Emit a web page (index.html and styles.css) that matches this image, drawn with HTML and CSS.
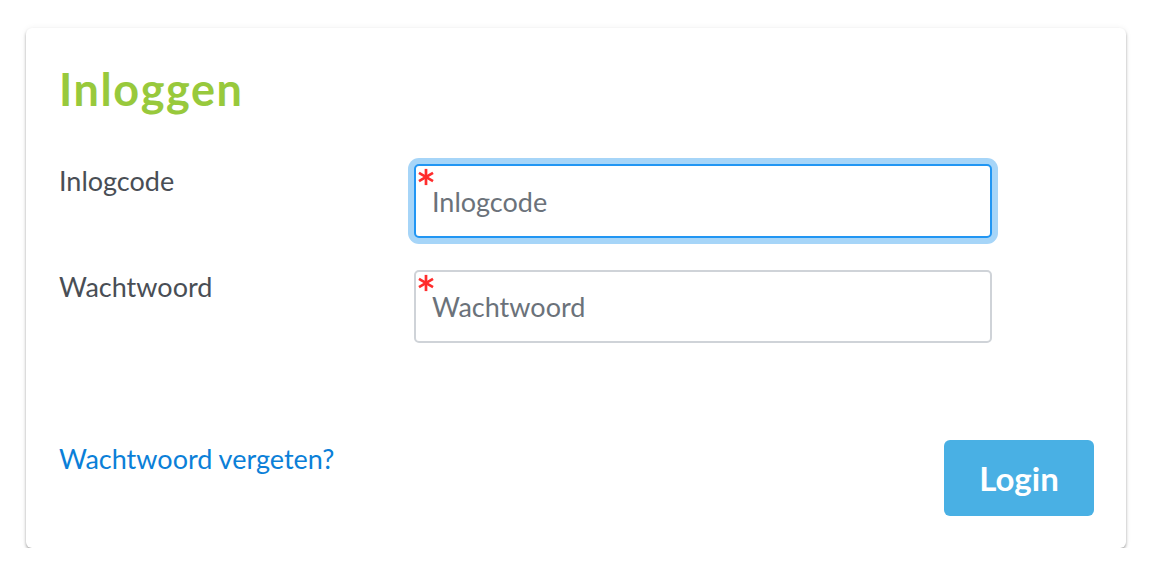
FILE: index.html
```html
<!DOCTYPE html>
<html lang="nl">
<head>
<meta charset="utf-8">
<title>Inloggen</title>
<link rel="stylesheet" href="styles.css">
</head>
<body>
<div class="card">
  <h1 class="title">Inloggen</h1>
  <form class="form">
    <div class="row">
      <label class="label" for="code">Inlogcode</label>
      <div class="field">
        <input class="input input-focus" id="code" type="text" placeholder="Inlogcode">
        <svg class="req" viewBox="0 0 20 20" aria-hidden="true"><g stroke="#ff2d2d" stroke-width="3" stroke-linecap="butt"><line x1="10" y1="1" x2="10" y2="19"/><line x1="2.2" y1="5.5" x2="17.8" y2="14.5"/><line x1="2.2" y1="14.5" x2="17.8" y2="5.5"/></g></svg>
      </div>
    </div>
    <div class="row">
      <label class="label" for="pw">Wachtwoord</label>
      <div class="field">
        <input class="input" id="pw" type="password" placeholder="Wachtwoord">
        <svg class="req" viewBox="0 0 20 20" aria-hidden="true"><g stroke="#ff2d2d" stroke-width="3" stroke-linecap="butt"><line x1="10" y1="1" x2="10" y2="19"/><line x1="2.2" y1="5.5" x2="17.8" y2="14.5"/><line x1="2.2" y1="14.5" x2="17.8" y2="5.5"/></g></svg>
      </div>
    </div>
  </form>
  <div class="footer">
    <a class="link" href="#">Wachtwoord vergeten?</a>
    <button class="btn" type="button">Login</button>
  </div>
</div>
</body>
</html>
```
FILE: styles.css
```css
* { box-sizing: border-box; }
html, body { margin: 0; padding: 0; background: #ffffff; }
body {
  font-family: Lato, "Noto Sans", sans-serif;
  padding: 28px 0 0 26px;
}
.card {
  width: 1100px;
  height: 520px;
  background: #fff;
  border-radius: 6px;
  box-shadow: 0 0 6px rgba(0,0,0,0.06), 0 2px 3px rgba(0,0,0,0.33);
  padding: 35px 32px 32px 33px;
  display: flex;
  flex-direction: column;
}
.title {
  margin: 0;
  font-size: 45px;
  line-height: 52px;
  font-weight: 700;
  color: #98c93c;
  letter-spacing: 1.6px;
}
.form {
  margin-top: 49px;
  display: flex;
  flex-direction: column;
  gap: 32px;
}
.row {
  display: grid;
  grid-template-columns: 355px 578px;
  align-items: start;
}
.label {
  font-size: 27px;
  line-height: 34px;
  color: #494e55;
  padding-top: 0;
}
.field { position: relative; }
.input {
  display: block;
  width: 578px;
  height: 73px;
  border: 2px solid #cfd3d8;
  border-radius: 5px;
  padding: 0 16px;
  font-family: Lato, "Noto Sans", sans-serif;
  font-size: 27px;
  color: #495057;
  outline: none;
  background: #fff;
}
.input::placeholder { color: #6b727a; }
.input-focus {
  border-color: #2196f3;
  box-shadow: 0 0 0 6px #a6d5f8;
  height: 74px;
}
.req {
  position: absolute;
  left: 3px;
  top: 4px;
  width: 18px;
  height: 18px;
}
.footer {
  margin-top: auto;
  display: flex;
  justify-content: space-between;
  align-items: flex-start;
}
.link {
  font-size: 27px;
  line-height: 34px;
  color: #0b7fd8;
  text-decoration: none;
  padding-top: 2px;
}
.btn {
  width: 150px;
  height: 76px;
  border: none;
  border-radius: 6px;
  background: #49b0e4;
  color: #fff;
  font-family: Lato, "Noto Sans", sans-serif;
  font-size: 33px;
  font-weight: 700;
  padding: 0;
}
```
